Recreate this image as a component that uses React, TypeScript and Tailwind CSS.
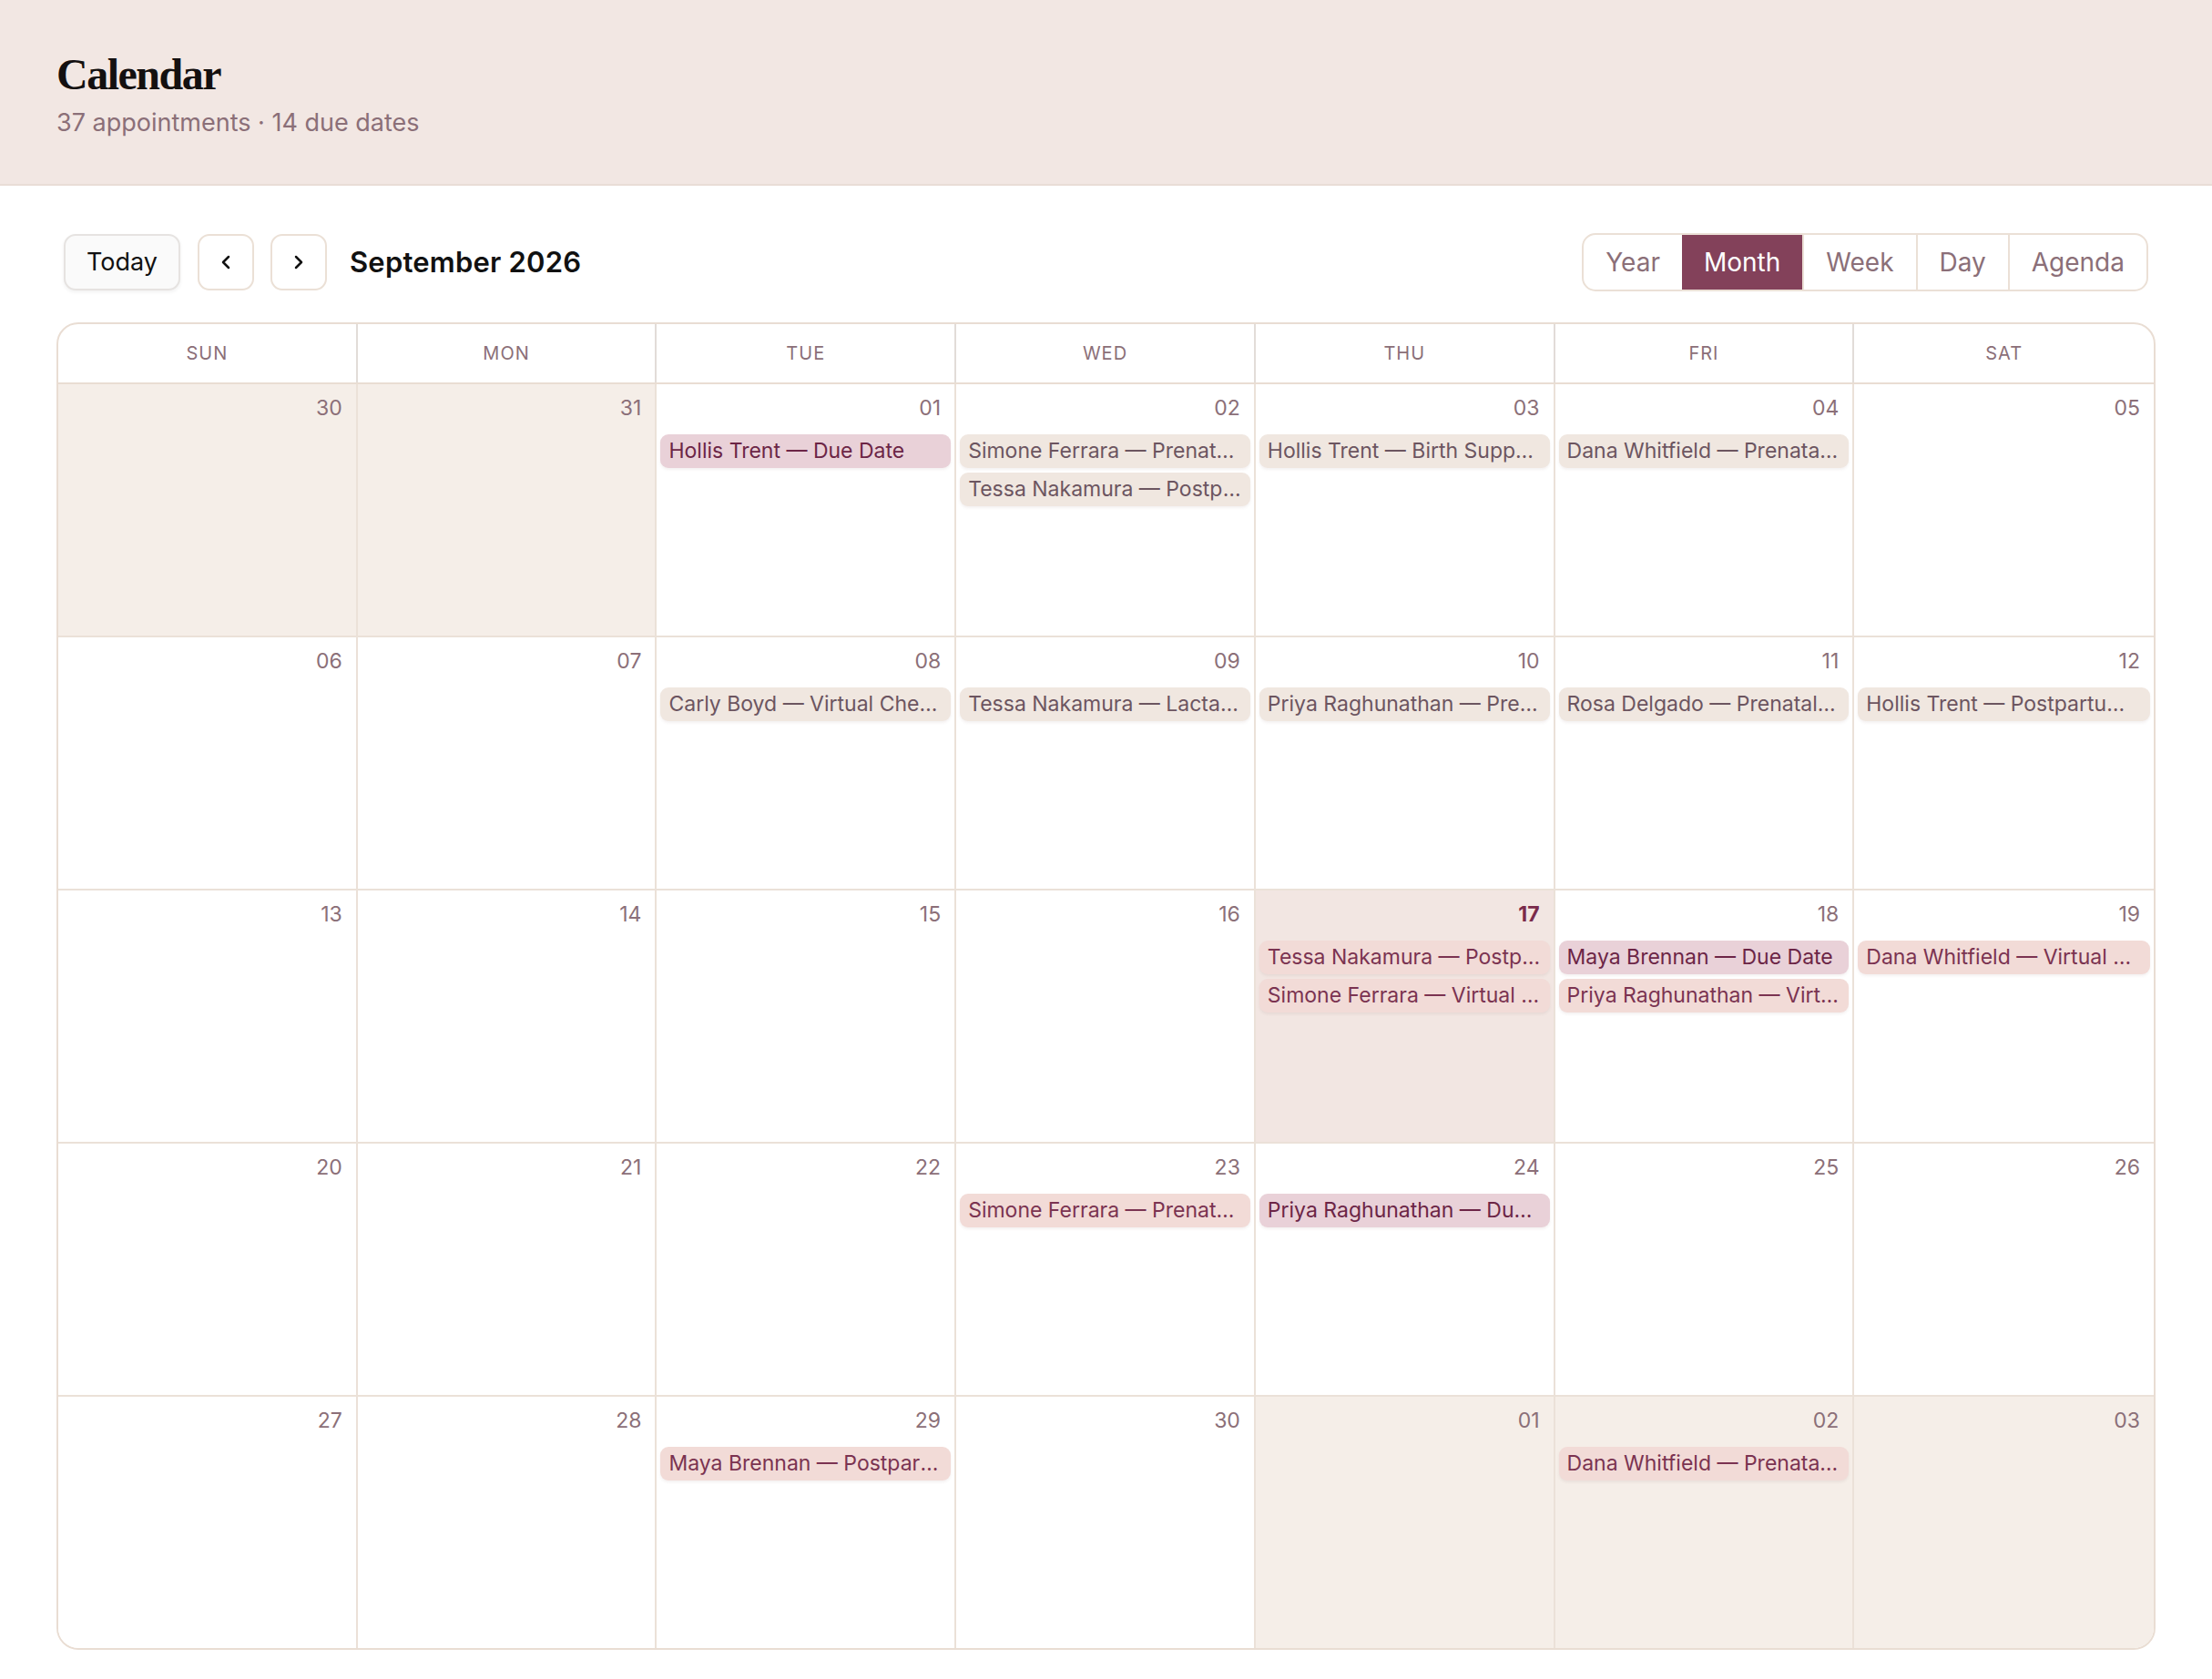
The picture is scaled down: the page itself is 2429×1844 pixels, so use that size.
import { ChevronLeft, ChevronRight } from "lucide-react";

type Kind = "past" | "upcoming" | "due";

type CalEvent = {
  label: string;
  kind: Kind;
};

type Day = {
  num: string;
  outside?: boolean;
  today?: boolean;
  events?: CalEvent[];
};

const weekdays = ["SUN", "MON", "TUE", "WED", "THU", "FRI", "SAT"];
const views = ["Year", "Month", "Week", "Day", "Agenda"];

const weeks: Day[][] = [
  [
    { num: "30", outside: true },
    { num: "31", outside: true },
    { num: "01", events: [{ label: "Hollis Trent — Due Date", kind: "due" }] },
    {
      num: "02",
      events: [
        { label: "Simone Ferrara — Prenatal Visit", kind: "past" },
        { label: "Tessa Nakamura — Postpartum Check", kind: "past" },
      ],
    },
    { num: "03", events: [{ label: "Hollis Trent — Birth Support Planning", kind: "past" }] },
    { num: "04", events: [{ label: "Dana Whitfield — Prenatal Visit", kind: "past" }] },
    { num: "05" },
  ],
  [
    { num: "06" },
    { num: "07" },
    { num: "08", events: [{ label: "Carly Boyd — Virtual Check-in", kind: "past" }] },
    { num: "09", events: [{ label: "Tessa Nakamura — Lactation Consult", kind: "past" }] },
    { num: "10", events: [{ label: "Priya Raghunathan — Prenatal Visit", kind: "past" }] },
    { num: "11", events: [{ label: "Rosa Delgado — Prenatal Visit", kind: "past" }] },
    { num: "12", events: [{ label: "Hollis Trent — Postpartum Visit", kind: "past" }] },
  ],
  [
    { num: "13" },
    { num: "14" },
    { num: "15" },
    { num: "16" },
    {
      num: "17",
      today: true,
      events: [
        { label: "Tessa Nakamura — Postpartum Visit", kind: "upcoming" },
        { label: "Simone Ferrara — Virtual Check-in", kind: "upcoming" },
      ],
    },
    {
      num: "18",
      events: [
        { label: "Maya Brennan — Due Date", kind: "due" },
        { label: "Priya Raghunathan — Virtual Check-in", kind: "upcoming" },
      ],
    },
    { num: "19", events: [{ label: "Dana Whitfield — Virtual Check-in", kind: "upcoming" }] },
  ],
  [
    { num: "20" },
    { num: "21" },
    { num: "22" },
    { num: "23", events: [{ label: "Simone Ferrara — Prenatal Visit", kind: "upcoming" }] },
    { num: "24", events: [{ label: "Priya Raghunathan — Due Date", kind: "due" }] },
    { num: "25" },
    { num: "26" },
  ],
  [
    { num: "27" },
    { num: "28" },
    { num: "29", events: [{ label: "Maya Brennan — Postpartum Visit", kind: "upcoming" }] },
    { num: "30" },
    { num: "01", outside: true },
    { num: "02", outside: true, events: [{ label: "Dana Whitfield — Prenatal Visit", kind: "upcoming" }] },
    { num: "03", outside: true },
  ],
];

const pillStyles: Record<Kind, string> = {
  past: "bg-[#f0e7e0] text-[#6c5560]",
  upcoming: "bg-[#f2dbd7] text-[#7b3351]",
  due: "bg-[#e9d1d8] text-[#6c2546]",
};

function EventPill({ event }: { event: CalEvent }) {
  return (
    <div
      className={`mx-[4px] h-[37px] rounded-[9px] px-[9px] text-[23px] leading-[37px] truncate shadow-[0_2px_3px_rgba(120,80,80,0.08)] ${pillStyles[event.kind]}`}
    >
      {event.label}
    </div>
  );
}

export default function App() {
  return (
    <div className="min-h-screen bg-white font-['Inter',sans-serif] text-[#111]">
      <header className="h-[204px] bg-[#f2e7e3] border-b-2 border-[#e9ddd6] px-[62px] pt-[54px]">
        <h1 className="font-['Liberation_Serif',serif] font-bold text-[48px] leading-[56px] tracking-[-1.5px] text-[#141010]">
          Calendar
        </h1>
        <p className="mt-[8px] text-[27px] leading-[34px] text-[#8b6f78]">
          37 appointments · 14 due dates
        </p>
      </header>

      <main className="px-[62px] pt-[52px]">
        <div className="flex items-center justify-between px-[8px]">
          <div className="flex items-center">
            <button className="h-[62px] w-[128px] rounded-[13px] border-2 border-[#e6e3e1] bg-[#fafafa] text-[27px] text-[#111] shadow-[0_2px_4px_rgba(0,0,0,0.06)]">
              Today
            </button>
            <button className="ml-[19px] flex h-[62px] w-[62px] items-center justify-center rounded-[13px] border-2 border-[#ebe0d6] bg-white">
              <ChevronLeft size={24} strokeWidth={2.5} className="text-[#111]" />
            </button>
            <button className="ml-[18px] flex h-[62px] w-[62px] items-center justify-center rounded-[13px] border-2 border-[#ebe0d6] bg-white">
              <ChevronRight size={24} strokeWidth={2.5} className="text-[#111]" />
            </button>
            <h2 className="ml-[25px] text-[31px] font-semibold tracking-[0.2px] text-[#111]">September 2026</h2>
          </div>

          <div className="flex h-[64px] overflow-hidden rounded-[15px] border-2 border-[#ebe0d6] bg-white">
            {views.map((v, i) => (
              <div
                key={v}
                className={`flex items-center px-[24px] text-[28px] ${
                  v === "Month" ? "bg-[#83415a] text-white" : "text-[#8b6f78]"
                } ${i > 1 ? "border-l-2 border-[#ebe0d6]" : ""}`}
              >
                {v}
              </div>
            ))}
          </div>
        </div>

        <div className="mt-[34px] overflow-hidden rounded-[24px] border-2 border-[#e9ddd3]">
          <div className="grid grid-cols-7 border-b-2 border-[#e9ddd3]">
            {weekdays.map((d, i) => (
              <div
                key={d}
                className={`flex h-[64px] items-center justify-center text-[20px] tracking-[1px] text-[#8b6f78] ${
                  i < 6 ? "border-r-2 border-[#e2dcd8]" : ""
                }`}
              >
                {d}
              </div>
            ))}
          </div>

          {weeks.map((week, wi) => (
            <div
              key={wi}
              className={`grid grid-cols-7 ${wi < weeks.length - 1 ? "border-b-2 border-[#ebe1d8]" : ""}`}
            >
              {week.map((day, di) => (
                <div
                  key={di}
                  className={`h-[276px] ${di < 6 ? "border-r-2 border-[#ebe1d8]" : ""} ${
                    day.today ? "bg-[#f2e6e2]" : day.outside ? "bg-[#f5eee8]" : "bg-white"
                  }`}
                >
                  <div
                    className={`pr-[15px] pt-[11px] text-right text-[23px] leading-[30px] ${
                      day.today ? "font-bold text-[#7a2b4b]" : "text-[#8b6f78]"
                    }`}
                  >
                    {day.num}
                  </div>
                  <div className="mt-[14px] flex flex-col gap-[5px]">
                    {day.events?.map((e, ei) => (
                      <EventPill key={ei} event={e} />
                    ))}
                  </div>
                </div>
              ))}
            </div>
          ))}
        </div>
      </main>
    </div>
  );
}
